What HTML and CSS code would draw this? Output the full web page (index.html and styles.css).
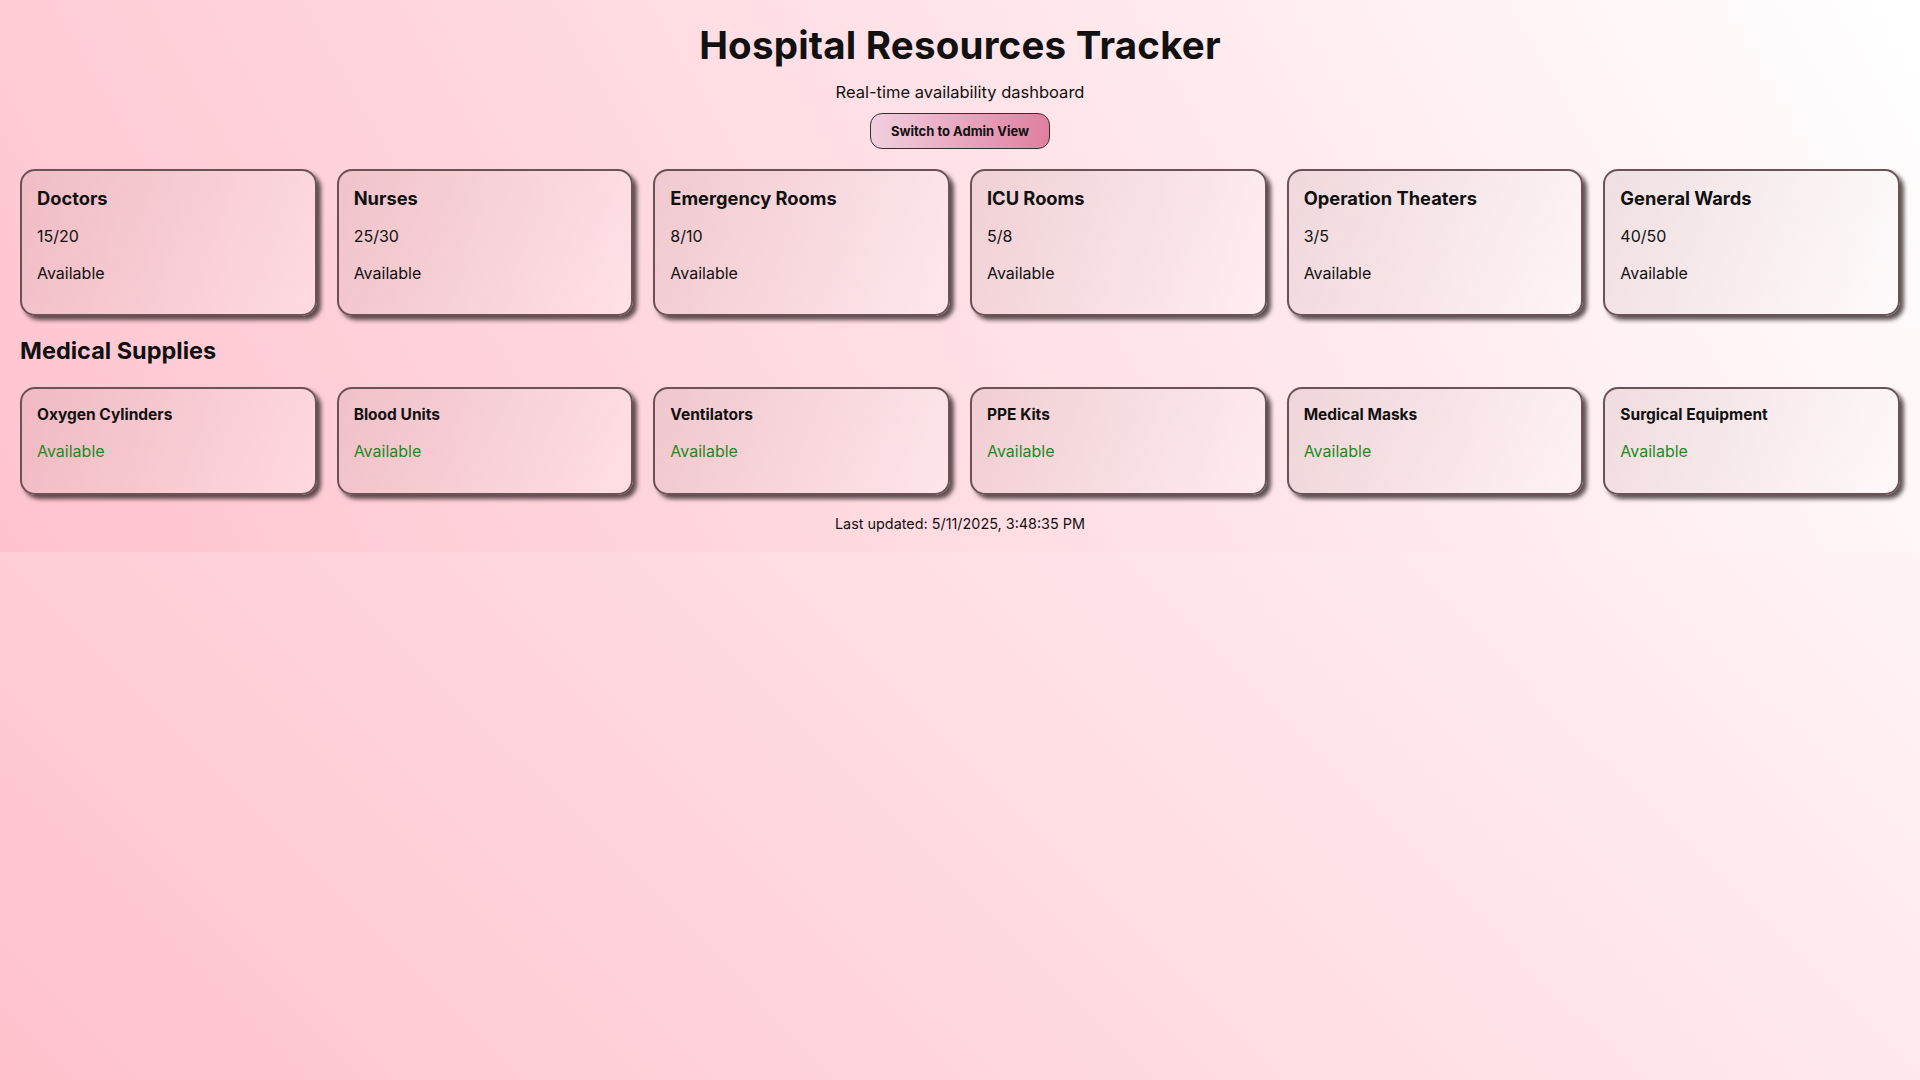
FILE: index.html
```html
<!DOCTYPE html>
<html lang="en">
<head>
  <meta charset="UTF-8">
  <title>Hospital Resources Tracker</title>
  <link rel="stylesheet" href="styles.css">
</head>
<body>

  <div class="app">
    <!-- Header -->
    <header class="header">
      <h1>Hospital Resources Tracker</h1>
      <p class="subtitle">Real-time availability dashboard</p>
      <button class="switch-btn">Switch to Admin View</button>
    </header>

    <!-- Resources -->
    <div class="grid">
      <div class="card">
        <h3>Doctors</h3>
        <p>15/20</p>
        <p>Available</p>
      </div>
      <div class="card">
        <h3>Nurses</h3>
        <p>25/30</p>
        <p>Available</p>
      </div>
      <div class="card">
        <h3>Emergency Rooms</h3>
        <p>8/10</p>
        <p>Available</p>
      </div>
      <div class="card">
        <h3>ICU Rooms</h3>
        <p>5/8</p>
        <p>Available</p>
      </div>
      <div class="card">
        <h3>Operation Theaters</h3>
        <p>3/5</p>
        <p>Available</p>
      </div>
      <div class="card">
        <h3>General Wards</h3>
        <p>40/50</p>
        <p>Available</p>
      </div>
    </div>

    <!-- Supplies -->
    <h2 class="section-title">Medical Supplies</h2>
    <div class="grid">
      <div class="card supply">
        <h4>Oxygen Cylinders</h4>
        <p class="status">Available</p>
      </div>
      <div class="card supply">
        <h4>Blood Units</h4>
        <p class="status">Available</p>
      </div>
      <div class="card supply">
        <h4>Ventilators</h4>
        <p class="status">Available</p>
      </div>
      <div class="card supply">
        <h4>PPE Kits</h4>
        <p class="status">Available</p>
      </div>
      <div class="card supply">
        <h4>Medical Masks</h4>
        <p class="status">Available</p>
      </div>
      <div class="card supply">
        <h4>Surgical Equipment</h4>
        <p class="status">Available</p>
      </div>
    </div>

    <p class="updated">Last updated: 5/11/2025, 3:48:35 PM</p>
  </div>

</body>
</html>
```

FILE: styles.css
```css
* {
  box-sizing: border-box;
}

html {
  min-height: 100%;
  background: linear-gradient(45deg, #ffc2cd, #ffffff);
}

body {
  margin: 0;
  font-family: 'Inter', sans-serif;
  color: #111;
}

.app {
  padding: 20px 20px 19px;
  background: linear-gradient(60deg, #ffc3ce, #ffe0e6 50%, #ffffff);
}

.header {
  text-align: center;
  margin-bottom: 20px;
}

h1 {
  font-size: 38.5px;
  line-height: 50px;
  margin: 0 0 12px;
  font-weight: 700;
  letter-spacing: 0.2px;
}

.subtitle {
  font-size: 16.5px;
  line-height: 20px;
  margin: 0 0 11px;
}

.switch-btn {
  font-family: inherit;
  font-size: 13px;
  font-weight: 700;
  color: #111;
  padding: 0 20px;
  height: 36px;
  border: 1px solid #3a2c30;
  border-radius: 12px;
  background: linear-gradient(to right, #f1d0df, #e07fa0);
  cursor: pointer;
}

.grid {
  display: grid;
  grid-template-columns: repeat(6, 1fr);
  gap: 20px;
}

.card {
  border: 2px solid #6a5256;
  border-radius: 15px;
  padding: 15px 15px 14px;
  background: linear-gradient(120deg, rgba(170, 130, 130, 0.18), rgba(255, 255, 255, 0.25));
  box-shadow: 4px 4px 4px rgba(40, 30, 30, 0.75);
}

.card.supply {
  padding-bottom: 15px;
}

.card h3 {
  font-size: 18.3px;
  line-height: 24px;
  margin: 0;
  font-weight: 700;
}

.card h4 {
  font-size: 15.5px;
  line-height: 21px;
  margin: 0;
  font-weight: 700;
}

.card p {
  font-size: 16px;
  line-height: 21px;
  margin: 16px 0 0;
}

.card p:last-child {
  margin-bottom: 16px;
}

.card .status {
  color: #1e8a1e;
}

.section-title {
  font-size: 23.5px;
  line-height: 30px;
  margin: 20px 0 21px;
  font-weight: 700;
}

.updated {
  text-align: center;
  font-size: 14.4px;
  line-height: 18px;
  margin: 20px 0 0;
}
```
